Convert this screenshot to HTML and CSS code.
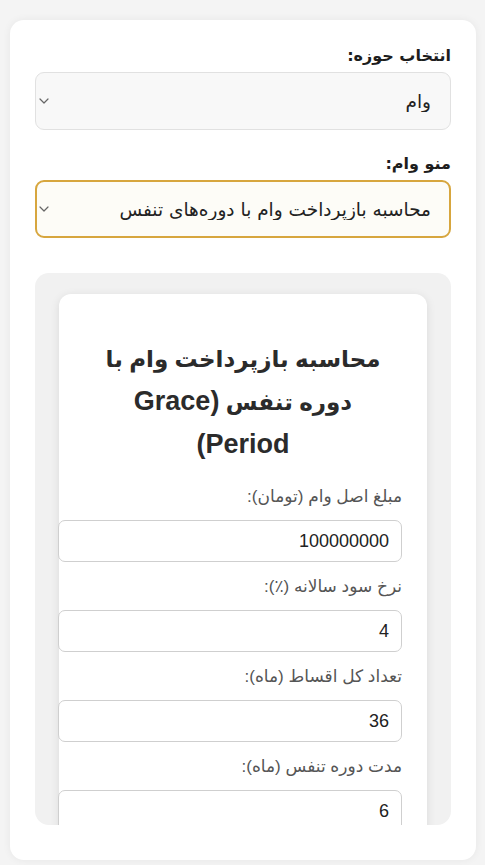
FILE: index.html
```html
<!DOCTYPE html>
<html lang="fa" dir="rtl">
<head>
<meta charset="utf-8">
<title>محاسبه وام</title>
<link rel="stylesheet" href="styles.css">
</head>
<body>
<main class="panel">
  <label class="top-label" for="domain">انتخاب حوزه:</label>
  <div class="select-wrap">
    <select id="domain" class="top-select">
      <option>وام</option>
    </select>
    <svg class="chevron" width="10" height="6" viewBox="0 0 10 6" aria-hidden="true"><path d="M1 1l4 4 4-4" fill="none" stroke="#666" stroke-width="1.2" stroke-linecap="round" stroke-linejoin="round"/></svg>
  </div>
  <label class="top-label" for="menu">منو وام:</label>
  <div class="select-wrap">
    <select id="menu" class="top-select is-active">
      <option>محاسبه بازپرداخت وام با دوره‌های تنفس</option>
    </select>
    <svg class="chevron" width="10" height="6" viewBox="0 0 10 6" aria-hidden="true"><path d="M1 1l4 4 4-4" fill="none" stroke="#666" stroke-width="1.2" stroke-linecap="round" stroke-linejoin="round"/></svg>
  </div>
  <section class="frame">
    <div class="calc-card">
      <h2 class="calc-title">محاسبه بازپرداخت وام با دوره تنفس <span class="latin">(Grace</span> <span class="latin">Period)</span></h2>
      <label class="field-label" for="principal">مبلغ اصل وام (تومان):</label>
      <input id="principal" class="field-input" type="text" value="100000000">
      <label class="field-label" for="rate">نرخ سود سالانه (٪):</label>
      <input id="rate" class="field-input" type="text" value="4">
      <label class="field-label" for="months">تعداد کل اقساط (ماه):</label>
      <input id="months" class="field-input" type="text" value="36">
      <label class="field-label" for="grace">مدت دوره تنفس (ماه):</label>
      <input id="grace" class="field-input" type="text" value="6">
    </div>
  </section>
</main>
</body>
</html>
```
FILE: styles.css
```css
* { margin: 0; }
html, body { height: 100%; }
body {
  background: #f4f4f4;
  padding: 20px 9px 0 10px;
  box-sizing: border-box;
  font-family: "DejaVu Sans", "Liberation Sans", sans-serif;
  color: #222;
  overflow: hidden;
}
.panel {
  display: block;
  background: #fff;
  border-radius: 14px;
  box-shadow: 0 0 8px rgba(0,0,0,0.06);
  padding: 24px 25px 35px;
}
.top-label {
  display: block;
  font-size: 16px;
  font-weight: bold;
  line-height: 24px;
  margin-bottom: 4px;
  color: #1e1e1e;
}
.select-wrap {
  position: relative;
  margin-bottom: 22px;
}
.top-select {
  display: block;
  width: 100%;
  height: 58px;
  box-sizing: border-box;
  appearance: none;
  -webkit-appearance: none;
  font-family: "DejaVu Sans", sans-serif;
  font-size: 18.5px;
  color: #222;
  background-color: #f8f8f8;
  border: 1px solid #e1e1e1;
  border-radius: 9px;
  padding: 0 19px 0 24px;
}
.top-select.is-active {
  border: 2px solid #d7a63e;
  background-color: #fdfcf7;
  padding-right: 18px;
}
.chevron {
  position: absolute;
  left: 4px;
  top: 50%;
  margin-top: -3px;
  pointer-events: none;
}
.frame {
  margin-top: 35px;
  height: 552px;
  box-sizing: border-box;
  background: #f1f1f1;
  border-radius: 14px;
  padding: 21px 24px;
  overflow: hidden;
}
.calc-card {
  background: #fff;
  border-radius: 12px;
  box-shadow: 0 2px 10px rgba(0,0,0,0.10);
  padding: 25px;
}
.calc-title {
  font-family: "Liberation Sans", "DejaVu Sans", sans-serif;
  font-size: 23px;
  font-weight: bold;
  line-height: 43px;
  text-align: center;
  color: #2b2b2b;
  margin: 19px 0 18px;
  padding: 0 6px;
}
.calc-title .latin {
  font-size: 27px;
  line-height: 1;
}
.field-label {
  display: block;
  font-family: "Liberation Sans", "DejaVu Sans", sans-serif;
  font-size: 17px;
  line-height: 24px;
  color: #555;
  margin-bottom: 11px;
}
.field-input {
  display: block;
  width: 100%;
  height: 18px;
  font-family: "Liberation Sans", sans-serif;
  font-size: 18px;
  line-height: 18px;
  color: #222;
  background: #fff;
  border: 1px solid #cfcfcf;
  border-radius: 7px;
  padding: 11px 12px;
  margin-bottom: 13px;
}
```
